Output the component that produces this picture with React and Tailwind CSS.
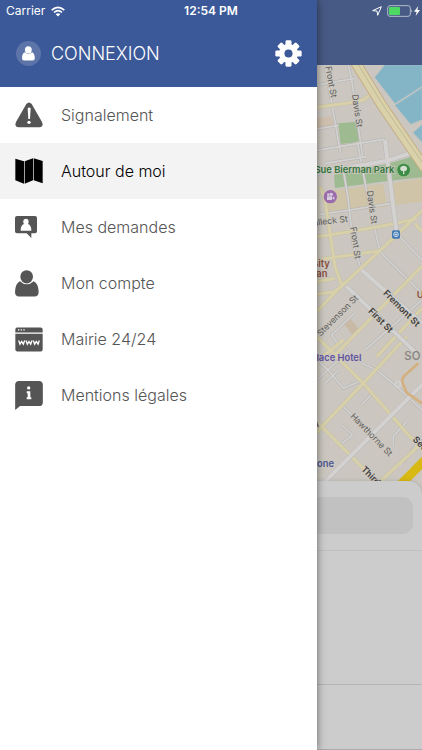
import React from 'react';

function WarningIcon() {
  return (
    <svg viewBox="0 0 84 78" className="h-[26px] w-7" aria-hidden="true">
      <path d="M34 6Q42-3 50 6L81 60Q87 75 73 76H11Q-3 75 3 60Z" fill="currentColor" />
      <path d="M38 18Q42 15 47 18L45 51H40Z" fill="#fff" />
      <circle cx="42" cy="61" r="5" fill="#fff" />
    </svg>
  );
}

function MapIcon() {
  return (
    <svg viewBox="0 0 84 78" className="h-[26px] w-7" aria-hidden="true">
      <path d="M1 2L27 10V77L1 67ZM29 10L54 1V67L29 77ZM56 1L83 9V76L56 67Z" fill="currentColor" />
    </svg>
  );
}

function RequestIcon() {
  return (
    <svg viewBox="0 0 66 66" className="size-[22px]" aria-hidden="true">
      <path d="M6 0H60Q66 0 66 6V46Q66 52 60 52H49V66L35 52H6Q0 52 0 46V6Q0 0 6 0Z" fill="currentColor" />
      <path d="M33 8C25 8 23 17 27 24Q17 27 17 44H49Q49 27 39 24C43 17 41 8 33 8Z" fill="#fff" />
    </svg>
  );
}

function PersonIcon({ className }) {
  return (
    <svg viewBox="0 0 72 80" className={className} aria-hidden="true">
      <ellipse cx="35" cy="20" rx="19" ry="20" fill="currentColor" />
      <path d="M15 33Q35 52 56 33Q70 39 71 65Q71 79 59 79H12Q0 79 0 65Q1 39 15 33Z" fill="currentColor" />
    </svg>
  );
}

function WebIcon() {
  return (
    <svg viewBox="0 0 84 74" className="h-[25px] w-7" aria-hidden="true">
      <path d="M6 1H77Q83 1 83 7V16H1V7Q1 1 6 1ZM1 20H83V67Q83 73 77 73H7Q1 73 1 67Z" fill="currentColor" />
      <path d="M9 8H13M17 8H21M25 8H29" stroke="#fff" strokeWidth="4" />
      <path d="M11 40L15 51L20 43L25 51L29 40M33 40L37 51L42 43L47 51L51 40M55 40L59 51L64 43L69 51L73 40" stroke="#fff" strokeWidth="4" fill="none" />
    </svg>
  );
}

function InfoIcon() {
  return (
    <svg viewBox="0 0 84 88" className="h-[29px] w-7" aria-hidden="true">
      <path d="M12 0H72Q84 0 84 12V65Q84 76 72 76H15L0 88V12Q0 0 12 0Z" fill="currentColor" />
      <circle cx="41" cy="21" r="5" fill="#fff" />
      <path d="M35 31H46V49H49V55H35V49H38V37H35Z" fill="#fff" />
    </svg>
  );
}

function GearIcon() {
  return (
    <svg viewBox="-40 -40 80 80" className="size-[27px]" aria-hidden="true">
      <g fill="#fff">
        {[0, 45, 90, 135].map((a) => (
          <rect key={a} x="-9" y="-39" width="18" height="78" rx="4" transform={`rotate(${a})`} />
        ))}
        <circle r="28" />
      </g>
      <circle r="12" fill="#3b5998" />
    </svg>
  );
}

function StatusBar() {
  return (
    <div className="absolute inset-x-0 top-0 grid h-[22px] grid-cols-3 items-center px-[6px] text-[12px] text-white">
      <div className="flex items-center gap-[6px]">
        <span>Carrier</span>
        <svg viewBox="0 0 42 32" className="h-[11px] w-[14px]" fill="none" stroke="#fff" strokeWidth="5" aria-hidden="true">
          <path d="M2 12Q21-5 40 12M9 19Q21 8 33 19" />
          <path d="M14 24Q21 18 28 24L21 31Z" fill="#fff" stroke="none" />
        </svg>
      </div>
      <span className="text-center font-semibold">12:54 PM</span>
      <div className="flex items-center justify-end gap-[5px]">
        <svg viewBox="0 0 30 30" className="size-[10px]" fill="none" stroke="#fff" strokeWidth="3" strokeLinejoin="round" aria-hidden="true">
          <path d="M2 14L28 2L17 28L15 15Z" />
        </svg>
        <svg viewBox="0 0 78 36" className="h-3 w-[26px]" aria-hidden="true">
          <rect x="2" y="2" width="68" height="32" rx="7" fill="none" stroke="#b4bccd" strokeWidth="3" />
          <rect x="6" y="6" width="33" height="24" rx="3" fill="#4cd964" />
          <path d="M73 13Q79 18 73 23Z" fill="#b4bccd" />
        </svg>
        <svg viewBox="0 0 18 30" className="-mx-1 h-[10px] w-[6px]" aria-hidden="true">
          <path d="M13 0L0 17H8L5 30L18 12H10Z" fill="#fff" />
        </svg>
      </div>
    </div>
  );
}

function CityMap() {
  const label = { fill: '#5d5c59', stroke: '#cbc7c0', strokeWidth: 4, paintOrder: 'stroke' };
  const bold = { ...label, fill: '#3e3d3c', fontWeight: 600 };
  const avenues =
    'M50 142L140 130L190 120L222 95M60 380L75 420L90 520L105 620L125 675M50 530L150 515L290 490L350 475M50 600L240 572M50 755L120 682L240 572L366 452M50 665L105 655M50 702L100 697L120 682M345 490L366 515M100 890L366 618M230 890L366 745M50 830L190 970L330 1130L366 1160M320 830L190 970L65 1100L50 1118M50 1085L65 1100L235 1270M366 1148L235 1270M50 905L130 840';
  const streets =
    'M75 15L95 130L122 280M145 15L155 60L188 292M50 75L165 55M50 207L115 196M50 271L250 238L262 300M172 245L205 420L240 575L366 700M130 330L145 420L160 560L185 630M60 463L150 450L275 430M290 520L366 600M165 758L95 825L115 855M195 870L366 720M50 900L85 930L130 985L190 960M115 930L75 970M130 1040L180 1090M125 1095L158 1125L125 1150M185 1035L215 1002M185 910L230 930L290 980L366 1050M320 1085L280 1130L280 1155M366 1130L300 1220M75 310L200 290M50 960L150 870';
  const main = 'M50 339L262 302L345 275M255 240L262 300L285 480L290 520M185 630L366 790M140 680L350 880M366 975L300 1040L75 1265';
  return (
    <svg viewBox="-900 15 1266 1296" preserveAspectRatio="xMaxYMin slice" className="h-[432px] w-full shrink-0" role="img" aria-label="Plan du quartier" fontFamily='Inter, "Liberation Sans", sans-serif'>
      <rect x="-900" y="15" width="1266" height="1296" fill="#cbc7c0" />
      <path d="M255 15L225 52L285 130L366 78V15ZM286 136L366 84V178L332 192ZM340 218L366 195V245Z" fill="#83b5c6" stroke="#98bbc5" strokeWidth="3" />
      <path d="M115 190L172 185L182 245L122 252ZM102 345L262 312L335 290L366 320V352L270 362L105 384Z" fill="#9dba91" />
      <path d="M65 395L250 372L262 440L80 460ZM278 370L366 355V425L285 435Z" fill="#cfc4a8" />
      <path d="M50 175L95 168L101 195L50 203Z" fill="#cfbfae" />
      <path d="M130 790L150 775L178 808L157 824Z" fill="#c9baa5" />
      <g fill="none" strokeLinejoin="round">
        <path d={streets} stroke="#b8b7b5" strokeWidth="9" />
        <path d={streets} stroke="#d3d2d0" strokeWidth="5" />
        <path d={avenues} stroke="#c6bfa6" strokeWidth="12" />
        <path d={avenues} stroke="#d7d0aa" strokeWidth="9" />
        <path d={main} stroke="#b9b8b7" strokeWidth="15" />
        <path d={main} stroke="#d3d2d1" strokeWidth="12" />
        <path d="M165 5L245 135L375 325" stroke="#c5a97f" strokeWidth="32" />
        <path d="M165 5L245 135L375 325" stroke="#d8d1aa" strokeWidth="27" />
        <path d="M169 5L249 135L379 325" stroke="#c3b995" strokeWidth="3" />
        <path d="M355 910L318 943Q303 955 308 970L320 998L366 1030" stroke="#d4b080" strokeWidth="8" />
        <circle cx="294" cy="973" r="8" stroke="#d5d4d3" strokeWidth="4" />
        <path d="M385 1190L290 1285" stroke="#d8b914" strokeWidth="26" />
      </g>
      <g fontSize="26" {...label}>
        <text transform="translate(76 20) rotate(80)">Front St</text>
        <text transform="translate(156 104) rotate(82)">Davis St</text>
        <text transform="translate(200 393) rotate(82)">Davis St</text>
        <text x="144" y="485" textAnchor="end" transform="rotate(-7 144 485)">Halleck St</text>
        <text transform="translate(151 502) rotate(82)">Front St</text>
        <text transform="translate(62 830) rotate(-45)">Stevenson St</text>
        <text transform="translate(150 1070) rotate(46)">Hawthorne St</text>
      </g>
      <g fontSize="27" {...bold}>
        <text transform="translate(248 701) rotate(45)">Fremont St</text>
        <text transform="translate(203 755) rotate(45)">First St</text>
        <text transform="translate(337 1140) rotate(45)">Second</text>
        <text transform="translate(182 1229) rotate(45)">Third</text>
      </g>
      <g fontSize="28" fontWeight="600" stroke="#cbc7c0" strokeWidth="4" paintOrder="stroke">
        <text x="283" y="340" textAnchor="end" fill="#32763a">Sue Bierman Park</text>
        <text x="89" y="620" textAnchor="end" fill="#8a4f3c">University</text>
        <text x="82" y="650" textAnchor="end" fill="#8a4f3c">Club San</text>
        <text x="350" y="714" fill="#8a4f3c">U</text>
        <text x="184" y="903" textAnchor="end" fill="#62539f">Palace Hotel</text>
        <text x="102" y="1221" textAnchor="end" fill="#4c5690">one</text>
        <text x="57" y="1100" textAnchor="end" fill="#6d4b3c">A</text>
      </g>
      <text x="313" y="900" fontSize="34" fontWeight="500" fill="#85827e">SO</text>
      <circle cx="311" cy="330" r="19" fill="#3c8c46" />
      <path d="M311 317C299 317 297 331 307 333H309V343H313V333H315C325 331 323 317 311 317Z" fill="#d6dfd2" />
      <circle cx="91" cy="410" r="20" fill="#9b6bae" />
      <path d="M81 409H96V420H81ZM97 413L103 409V419L97 416Z" fill="#d8cddd" />
      <circle cx="85" cy="404" r="4" fill="#d8cddd" />
      <circle cx="94" cy="403" r="5" fill="#d8cddd" />
      <rect x="276" y="511" width="24" height="25" rx="5" fill="#4179b5" />
      <circle cx="288" cy="523" r="7" fill="none" stroke="#cbdbe8" strokeWidth="3" />
      <path d="M284 521H292V526H284Z" fill="#cbdbe8" />
    </svg>
  );
}

const items = [
  { text: 'Signalement', icon: <WarningIcon /> },
  { text: 'Autour de moi', icon: <MapIcon />, active: true },
  { text: 'Mes demandes', icon: <RequestIcon /> },
  { text: 'Mon compte', icon: <PersonIcon className="h-[27px] w-6" /> },
  { text: 'Mairie 24/24', icon: <WebIcon /> },
  { text: 'Mentions légales', icon: <InfoIcon /> },
];

export default function App() {
  return (
    <div className="relative flex min-h-screen flex-col overflow-hidden bg-[#cccccc] font-['Inter','Liberation_Sans',sans-serif]">
      <div className="h-[65px] shrink-0 bg-[#475a85]" />
      <CityMap />
      <section className="relative -mt-4 flex grow flex-col rounded-t-[14px] border-b border-[#aaaaae] bg-[#cccccc] shadow-[0_0_4px_rgba(0,0,0,0.15)]">
        <div className="border-b border-[#c0c0c0] px-[9px] py-4">
          <input type="search" aria-label="Rechercher" className="block h-[37px] w-full rounded-[10px] bg-[#c1c1c1] px-3" />
        </div>
        <div className="h-[134px] border-b border-[#b3b3b8]" />
      </section>

      <aside className="absolute inset-y-0 left-0 w-3/4 bg-white shadow-[0_0_8px_rgba(0,0,0,0.5)]">
        <header className="flex h-[87px] items-center justify-between bg-[#3b5998] pt-5 pr-[15px] pl-4">
          <button type="button" className="flex items-center gap-[10px] text-[18px] font-light text-white">
            <span className="flex size-[25px] items-center justify-center rounded-full bg-[#5c74a8]">
              <PersonIcon className="h-[15px] w-[13px]" />
            </span>
            CONNEXION
          </button>
          <button type="button" aria-label="Paramètres">
            <GearIcon />
          </button>
        </header>
        <nav>
          {items.map((item) => (
            <a
              key={item.text}
              href="#"
              aria-current={item.active ? 'page' : undefined}
              className={`flex h-14 items-center px-[15px] text-[16px] font-light ${item.active ? 'bg-[#f3f3f3] text-black' : 'text-[#555555]'}`}
            >
              <span className="flex w-[46px] shrink-0 items-center">{item.icon}</span>
              {item.text}
            </a>
          ))}
        </nav>
      </aside>
      <StatusBar />
    </div>
  );
}
